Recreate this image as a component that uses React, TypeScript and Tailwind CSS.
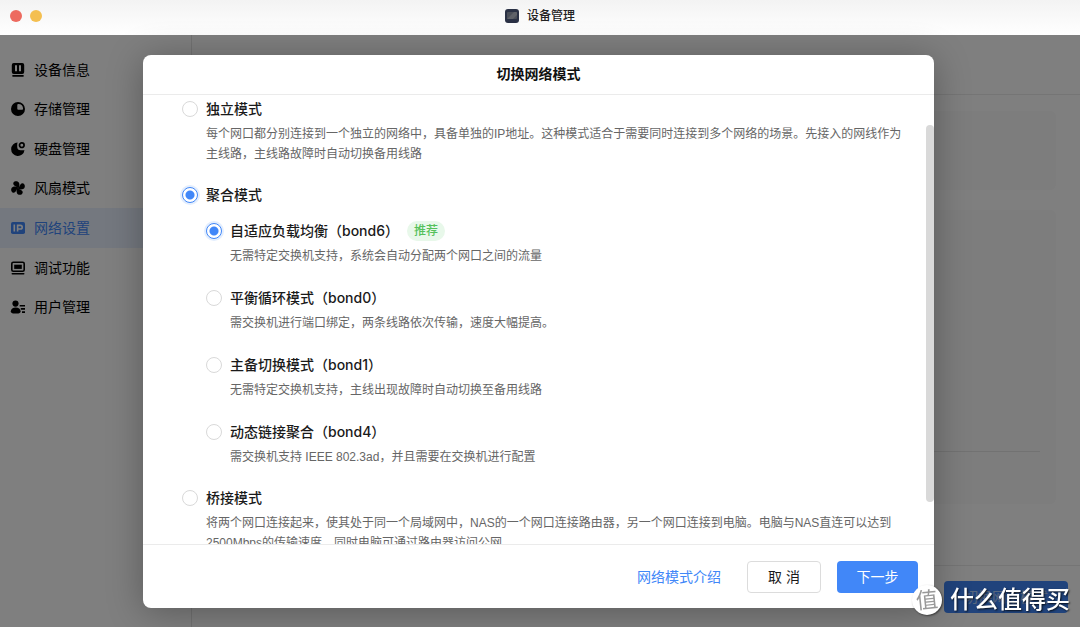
import { useState, type ReactNode } from "react";

const menu: { label: string; icon: ReactNode }[] = [
  {
    label: "设备信息",
    icon: (
      <>
        <path
          fillRule="evenodd"
          d="M2.8 0h8.400a2 2 0 0 1 2 2v7a2 2 0 0 1-2 2H2.800a2 2 0 0 1-2-2V2a2 2 0 0 1 2-2ZM4 2.200v6h2v-6Zm4 0v6h2v-6Z"
        />
        <rect x="1.200" y="12" width="11.600" height="1.700" rx=".8" />
      </>
    ),
  },
  {
    label: "存储管理",
    icon: (
      <path
        fillRule="evenodd"
        d="M7 0a7 7 0 1 0 0 14A7 7 0 0 0 7 0Zm.300 1.900A5 5 0 0 1 12.100 6.700a1 1 0 0 1-1 1H7.300a1 1 0 0 1-1-1V2.900a1 1 0 0 1 1-1Z"
      />
    ),
  },
  {
    label: "硬盘管理",
    icon: (
      <>
        <path d="M6.600.600a6.700 6.700 0 1 0 6.900 7.600h-3.800A3.500 3.500 0 0 1 6.200 4.700V3A5 5 0 0 1 6.600.600Z" />
        <circle cx="10.800" cy="3.200" r="2.300" fill="none" stroke="currentColor" strokeWidth="1.700" />
      </>
    ),
  },
  {
    label: "风扇模式",
    icon: (
      <>
        <path d="M7.600 7.200C8.600 5.500 8.700 3.500 8 1.800 7.300.100 5 -.300 3.500.600 2 1.500 1.900 3.300 3 4.200c1.300 1 2.400 1.200 4.600 3Z" />
        <path d="M6.800 7.600c1.700 1 3.700 1.100 5.400.400 1.700-.700 2.100-3 1.200-4.500-.900-1.500-2.700-1.600-3.600-.500-1 1.300-1.200 2.400-3 4.600Z" />
        <path d="M6.400 6.800c-1 1.700-1.100 3.700-.400 5.400.700 1.700 3 2.100 4.500 1.200 1.500-.900 1.600-2.700.500-3.600-1.300-1-2.400-1.200-4.600-3Z" />
        <path d="M7.200 6.400C5.500 5.400 3.500 5.300 1.800 6 .100 6.700-.300 9 .600 10.500c.900 1.500 2.700 1.600 3.600.500 1-1.300 1.200-2.400 3-4.600Z" />
      </>
    ),
  },
  {
    label: "网络设置",
    icon: (
      <>
        <rect y="1" width="14" height="12" rx="1.800" />
        <path
          d="M3.300 3.600v6.800M6.600 10.400V4.400h2.800a1.800 1.800 0 0 1 0 3.600H6.600"
          fill="none"
          stroke="#fff"
          strokeWidth="1.600"
        />
      </>
    ),
  },
  {
    label: "调试功能",
    icon: (
      <>
        <rect x=".800" y="1.300" width="12.400" height="9" rx="1.500" fill="none" stroke="currentColor" strokeWidth="1.600" />
        <rect x="3.200" y="3.700" width="7.600" height="4.200" />
        <rect x=".500" y="11.900" width="13" height="1.600" rx=".800" />
      </>
    ),
  },
  {
    label: "用户管理",
    icon: (
      <>
        <circle cx="4.500" cy="3.600" r="3.100" />
        <path d="M-.200 11.300C-.200 8.800 2 7.500 4.700 7.500s4.900 1.300 4.900 3.800c0 1.300-1 2.100-2.300 2.100H2.100C.900 13.400-.200 12.600-.200 11.300Z" />
        <path d="M8.700 4.900h5.300v1.700H8.700ZM9.800 8.100H14v1.700H9.800ZM11 11.300h3V13h-3Z" />
      </>
    ),
  },
];

const bonds = [
  {
    value: "bond6",
    title: "自适应负载均衡（bond6）",
    desc: "无需特定交换机支持，系统会自动分配两个网口之间的流量",
    recommended: true,
  },
  {
    value: "bond0",
    title: "平衡循环模式（bond0）",
    desc: "需交换机进行端口绑定，两条线路依次传输，速度大幅提高。",
  },
  {
    value: "bond1",
    title: "主备切换模式（bond1）",
    desc: "无需特定交换机支持，主线出现故障时自动切换至备用线路",
  },
  {
    value: "bond4",
    title: "动态链接聚合（bond4）",
    desc: "需交换机支持 IEEE 802.3ad，并且需要在交换机进行配置",
  },
];

type OptionProps = {
  name: string;
  value: string;
  title: string;
  desc?: string;
  recommended?: boolean;
  checked: boolean;
  onSelect: (value: string) => void;
};

function Option({ name, value, title, desc, recommended, checked, onSelect }: OptionProps) {
  return (
    <div>
      <label className="flex h-7 items-center gap-2 text-sm font-medium text-[#1a1a1a]">
        <input
          type="radio"
          name={name}
          value={value}
          checked={checked}
          onChange={() => onSelect(value)}
          className="size-4 shrink-0 appearance-none rounded-full border border-[#d9d9d9] bg-white checked:border-[#4187f8] checked:bg-[radial-gradient(circle,#4187f8_4px,#fff_5px)] checked:shadow-[0_0_0_2px_#e3eefe]"
        />
        {title}
        {recommended && (
          <span className="rounded-full bg-[#e8f8ea] px-[7px] text-xs leading-5 text-[#55c15b]">推荐</span>
        )}
      </label>
      {desc && (
        <p className="mt-px pl-6 font-['Liberation_Sans','Noto_Sans_CJK_SC',sans-serif] text-xs leading-5 text-[#666]">
          {desc}
        </p>
      )}
    </div>
  );
}

function Sidebar() {
  return (
    <nav className="w-[192px] shrink-0 border-r border-[#e4e4e4] pt-[15px]">
      <ul className="grid h-[277px] auto-rows-fr">
        {menu.map(({ label, icon }) => (
          <li key={label}>
            <a
              href="#"
              className={
                label === "网络设置"
                  ? "flex h-full items-center gap-[9px] bg-[#e9f1ff] pl-[11px] text-sm text-[#4187f8]"
                  : "flex h-full items-center gap-[9px] pl-[11px] text-sm text-black"
              }
            >
              <svg viewBox="0 0 14 14" className="size-[14px] overflow-visible" fill="currentColor" aria-hidden="true">
                {icon}
              </svg>
              {label}
            </a>
          </li>
        ))}
      </ul>
    </nav>
  );
}

function NetworkPage() {
  return (
    <main className="flex min-w-0 flex-1 flex-col">
      <div className="h-[60px] shrink-0 border-b border-[#eaeaea]" />
      <div className="flex flex-1 flex-col gap-5 px-6 pt-4">
        <div className="h-[79px] rounded-md bg-[#fafafa]" />
        <div className="h-[294px] rounded-md bg-[#fafafa] px-4 pt-[241px]">
          <hr className="border-[#e4e4e4]" />
        </div>
      </div>
      <footer className="flex h-[62px] shrink-0 items-center justify-end border-t border-[#eaeaea] pr-3">
        <button className="h-8 rounded bg-[#4187f8] px-5 text-sm text-white/60">切换网络模式</button>
      </footer>
    </main>
  );
}

function ModeDialog() {
  const [mode, setMode] = useState("aggregate");
  const [bond, setBond] = useState("bond6");

  return (
    <section
      role="dialog"
      aria-label="切换网络模式"
      className="flex h-full flex-col overflow-hidden rounded-lg bg-white shadow-[0_4px_36px_rgba(0,0,0,0.3)]"
    >
      <h2 className="flex h-10 shrink-0 items-center justify-center border-b border-[#ebebeb] pb-px text-sm font-bold text-[#111]">
        切换网络模式
      </h2>
      <div className="flex min-h-0 flex-1">
        <div className="flex min-w-0 flex-1 flex-col gap-[17px] overflow-y-auto pr-6 pl-[39px] [scrollbar-width:none]">
          <Option
            name="mode"
            value="independent"
            title="独立模式"
            desc="每个网口都分别连接到一个独立的网络中，具备单独的IP地址。这种模式适合于需要同时连接到多个网络的场景。先接入的网线作为主线路，主线路故障时自动切换备用线路"
            checked={mode === "independent"}
            onSelect={setMode}
          />
          <div>
            <Option
              name="mode"
              value="aggregate"
              title="聚合模式"
              checked={mode === "aggregate"}
              onSelect={setMode}
            />
            <div className="mt-2 flex flex-col gap-[18px] pl-6">
              {bonds.map((item) => (
                <Option
                  key={item.value}
                  name="bond"
                  {...item}
                  checked={bond === item.value}
                  onSelect={setBond}
                />
              ))}
            </div>
          </div>
          <Option
            name="mode"
            value="bridge"
            title="桥接模式"
            desc="将两个网口连接起来，使其处于同一个局域网中，NAS的一个网口连接路由器，另一个网口连接到电脑。电脑与NAS直连可以达到2500Mbps的传输速度，同时电脑可通过路由器访问公网"
            checked={mode === "bridge"}
            onSelect={setMode}
          />
        </div>
        <div className="w-2 shrink-0 pt-[30px] pb-[42px]">
          <div className="h-full rounded-full bg-[#d9d9d9]" />
        </div>
      </div>
      <footer className="flex h-16 shrink-0 items-center justify-end border-t border-[#ebebeb] pr-4 text-sm">
        <a href="#" className="mr-[26px] text-[#4187f8]">
          网络模式介绍
        </a>
        <button className="mr-4 h-8 w-[74px] rounded border border-[#dcdcdc] text-[#1a1a1a]">取 消</button>
        <button className="h-8 w-[81px] rounded bg-[#4187f8] text-white">下一步</button>
      </footer>
    </section>
  );
}

export default function App() {
  return (
    <div className="flex h-screen flex-col bg-white font-['Inter','Noto_Sans_CJK_SC',sans-serif]">
      <header className="flex h-[35px] shrink-0 items-center bg-linear-to-b from-[#f3f3f3] to-white px-[10px] pb-1">
        <div className="flex flex-1 gap-2">
          <span className="size-3 rounded-full bg-[#ed6a5f]" />
          <span className="size-3 rounded-full bg-[#f4bf50]" />
        </div>
        <h1 className="flex items-center gap-2 text-xs font-medium text-[#222]">
          <svg viewBox="0 0 14 14" className="size-[14px]" aria-hidden="true">
            <rect width="14" height="14" rx="3" fill="#2a3145" />
            <rect x="2" y="3" width="10" height="7" rx="1" fill="#4b4f59" />
            <path d="M2 10 9 3h2a1 1 0 0 1 1 1v2l-4 4Z" fill="#5f6269" />
          </svg>
          设备管理
        </h1>
        <div className="flex-1" />
      </header>

      <div className="relative flex min-h-0 flex-1">
        <Sidebar />
        <NetworkPage />
        <div className="absolute inset-0 bg-black/50 pt-5 pr-[146px] pb-[19px] pl-[143px]">
          <ModeDialog />
        </div>
      </div>

      <div className="fixed right-[10px] bottom-3 flex items-center gap-2">
        <span className="flex size-[30px] items-center justify-center rounded-full bg-white text-[22px] text-[#999] shadow-[1px_1px_2px_rgba(0,0,0,0.5)]">
          <span className="-rotate-6">值</span>
        </span>
        <span className="text-2xl leading-[30px] font-medium text-white [text-shadow:1px_1px_2px_rgba(0,0,0,0.8)]">
          什么值得买
        </span>
      </div>
    </div>
  );
}
